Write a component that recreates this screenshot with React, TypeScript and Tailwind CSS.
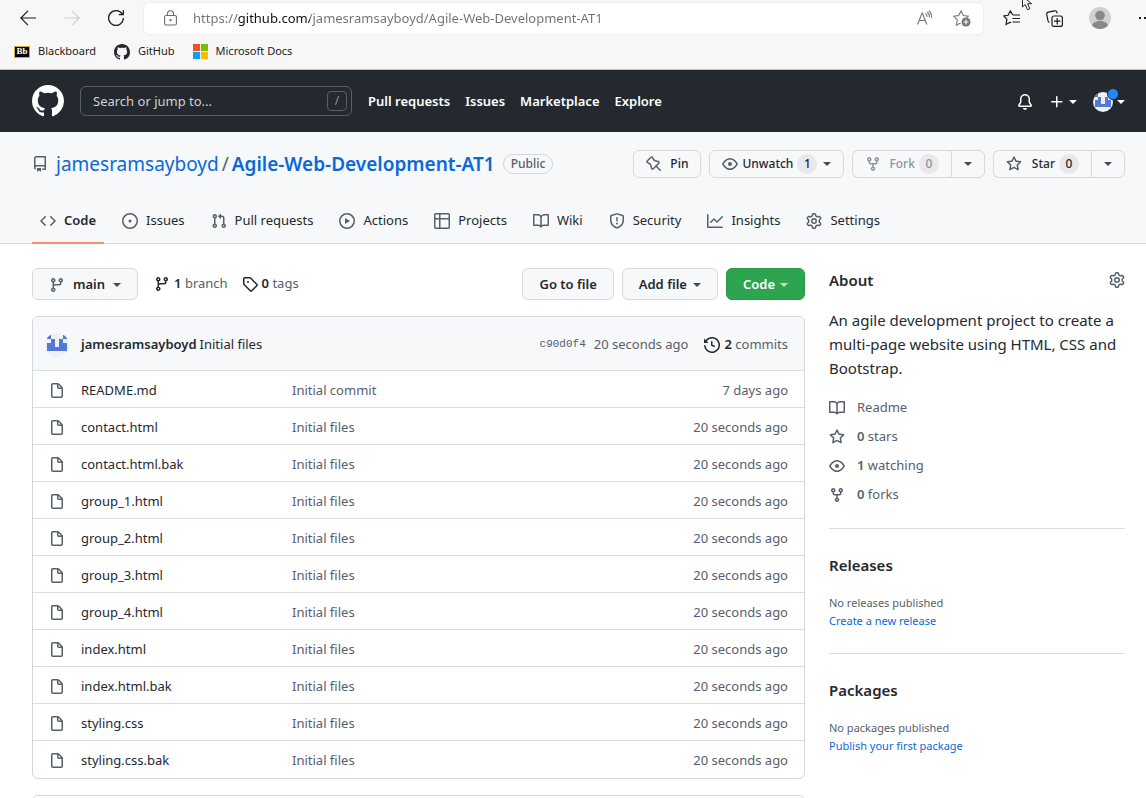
import React from "react";

const ICONS = {
  repo: "M2 2.5A2.5 2.5 0 014.5 0h8.75a.75.75 0 01.75.75v12.5a.75.75 0 01-.75.75h-2.5a.75.75 0 110-1.5h1.75v-2h-8a1 1 0 00-.714 1.7.75.75 0 01-1.072 1.05A2.495 2.495 0 012 11.5v-9zm10.5-1V9h-8c-.356 0-.694.074-1 .208V2.5a1 1 0 011-1h8zM5 12.25v3.25a.25.25 0 00.4.2l1.45-1.087a.25.25 0 01.3 0L8.6 15.7a.25.25 0 00.4-.2v-3.25a.25.25 0 00-.25-.25h-3.5a.25.25 0 00-.25.25z",
  code: "M4.72 3.22a.75.75 0 011.06 1.06L2.06 8l3.72 3.72a.75.75 0 11-1.06 1.06L.47 8.53a.75.75 0 010-1.06l4.25-4.25zm6.56 0a.75.75 0 10-1.06 1.06L13.94 8l-3.72 3.72a.75.75 0 101.06 1.06l4.25-4.25a.75.75 0 000-1.06l-4.25-4.25z",
  issue: "M8 9.5a1.5 1.5 0 100-3 1.5 1.5 0 000 3zM8 0a8 8 0 100 16A8 8 0 008 0zM1.5 8a6.5 6.5 0 1113 0 6.5 6.5 0 01-13 0z",
  pull: "M7.177 3.073L9.573.677A.25.25 0 0110 .854v4.792a.25.25 0 01-.427.177L7.177 3.427a.25.25 0 010-.354zM3.75 2.5a.75.75 0 100 1.5.75.75 0 000-1.5zm-2.25.75a2.25 2.25 0 113 2.122v5.256a2.251 2.251 0 11-1.5 0V5.372A2.25 2.25 0 011.5 3.25zM11 2.5h-1V4h1a1 1 0 011 1v5.628a2.251 2.251 0 101.5 0V5A2.5 2.5 0 0011 2.5zm1 10.25a.75.75 0 111.5 0 .75.75 0 01-1.5 0zM3.75 12a.75.75 0 100 1.5.75.75 0 000-1.5z",
  play: "M1.5 8a6.5 6.5 0 1113 0 6.5 6.5 0 01-13 0zM8 0a8 8 0 100 16A8 8 0 008 0zM6.379 5.227A.25.25 0 006 5.442v5.117a.25.25 0 00.379.214l4.264-2.559a.25.25 0 000-.428L6.379 5.227z",
  table: "M0 1.75C0 .784.784 0 1.75 0h12.5C15.216 0 16 .784 16 1.75v3.585a.746.746 0 010 .83v8.085A1.75 1.75 0 0114.25 16H6.309a.748.748 0 01-1.118 0H1.75A1.75 1.75 0 010 14.25V6.165a.746.746 0 010-.83V1.75zM1.5 6.5v7.75c0 .138.112.25.25.25H5v-8H1.5zM5 5H1.5V1.75a.25.25 0 01.25-.25H5V5zm1.5 1.5v8h7.75a.25.25 0 00.25-.25V6.5h-8zm8-1.5h-8V1.5h7.75a.25.25 0 01.25.25V5z",
  book: "M0 1.75A.75.75 0 01.75 1h4.253c1.227 0 2.317.59 3 1.501A3.744 3.744 0 0111.006 1h4.245a.75.75 0 01.75.75v10.5a.75.75 0 01-.75.75h-4.507a2.25 2.25 0 00-1.591.659l-.622.621a.75.75 0 01-1.06 0l-.622-.621A2.25 2.25 0 005.258 13H.75a.75.75 0 01-.75-.75V1.75zm8.755 3a2.25 2.25 0 012.25-2.25H14.5v9h-3.757c-.71 0-1.4.201-1.992.572l.004-7.322zm-1.504 7.324l.004-5.073-.002-2.253A2.25 2.25 0 005.003 2.5H1.5v9h3.757a3.75 3.75 0 011.994.574z",
  shield: "M7.467.133a1.75 1.75 0 011.066 0l5.25 1.68A1.75 1.75 0 0115 3.48V7c0 1.566-.32 3.182-1.303 4.682-.983 1.498-2.585 2.813-5.032 3.855a1.7 1.7 0 01-1.33 0c-2.447-1.042-4.049-2.357-5.032-3.855C1.32 10.182 1 8.566 1 7V3.48a1.75 1.75 0 011.217-1.667l5.25-1.68zm.61 1.429a.25.25 0 00-.153 0l-5.25 1.68a.25.25 0 00-.174.238V7c0 1.358.275 2.666 1.057 3.86.784 1.194 2.121 2.34 4.366 3.297a.2.2 0 00.154 0c2.245-.956 3.582-2.104 4.366-3.298C13.225 9.666 13.5 8.36 13.5 7V3.48a.25.25 0 00-.174-.237l-5.25-1.68zM9 10.5a1 1 0 11-2 0 1 1 0 012 0zm-.25-5.75a.75.75 0 10-1.5 0v3a.75.75 0 001.5 0v-3z",
  graph: "M1.5 1.75a.75.75 0 00-1.5 0v12.5c0 .414.336.75.75.75h14.5a.75.75 0 000-1.5H1.5V1.75zm14.28 2.53a.75.75 0 00-1.06-1.06L10 7.94 7.53 5.47a.75.75 0 00-1.06 0L3.22 8.72a.75.75 0 001.06 1.06L7 7.06l2.47 2.47a.75.75 0 001.06 0l5.25-5.25z",
  gear: "M7.429 1.525a6.593 6.593 0 011.142 0c.036.003.108.036.137.146l.289 1.105c.147.56.55.967.997 1.189.174.086.341.183.501.29.417.278.97.423 1.53.27l1.102-.303c.11-.03.175.016.195.046.219.31.41.641.573.989.014.031.022.11-.059.19l-.815.806c-.411.406-.562.957-.53 1.456a4.588 4.588 0 010 .582c-.032.499.119 1.05.53 1.456l.815.806c.08.08.073.159.059.19a6.494 6.494 0 01-.573.99c-.02.029-.086.074-.195.045l-1.103-.303c-.559-.153-1.112-.008-1.529.27-.16.107-.327.204-.5.29-.449.222-.851.628-.998 1.189l-.289 1.105c-.029.11-.101.143-.137.146a6.613 6.613 0 01-1.142 0c-.036-.003-.108-.037-.137-.146l-.289-1.105c-.147-.56-.55-.967-.997-1.189a4.502 4.502 0 01-.501-.29c-.417-.278-.97-.423-1.53-.27l-1.102.303c-.11.03-.175-.016-.195-.046a6.492 6.492 0 01-.573-.989c-.014-.031-.022-.11.059-.19l.815-.806c.411-.406.562-.957.53-1.456a4.587 4.587 0 010-.582c.032-.499-.119-1.05-.53-1.456l-.815-.806c-.08-.08-.073-.159-.059-.19a6.44 6.44 0 01.573-.99c.02-.029.086-.075.195-.045l1.103.303c.559.153 1.112.008 1.529-.27.16-.107.327-.204.5-.29.449-.222.851-.628.998-1.189l.289-1.105c.029-.11.101-.143.137-.146zM8 0c-.236 0-.47.01-.701.03-.743.065-1.29.615-1.458 1.261l-.29 1.106c-.017.066-.078.158-.211.224a5.994 5.994 0 00-.668.386c-.123.082-.233.09-.3.071L3.27 2.776c-.644-.177-1.392.02-1.82.63a7.977 7.977 0 00-.704 1.217c-.315.675-.111 1.422.363 1.891l.815.806c.05.048.098.147.088.294a6.084 6.084 0 000 .772c.01.147-.038.246-.088.294l-.815.806c-.474.469-.678 1.216-.363 1.891.2.428.436.835.704 1.218.428.609 1.176.806 1.82.63l1.103-.303c.066-.019.176-.011.299.071.213.143.436.272.668.386.133.066.194.158.212.224l.289 1.106c.169.646.715 1.196 1.458 1.26a8.094 8.094 0 001.402 0c.743-.064 1.29-.614 1.458-1.26l.29-1.106c.017-.066.078-.158.211-.224a5.98 5.98 0 00.668-.386c.123-.082.233-.09.3-.071l1.102.302c.644.177 1.392-.02 1.82-.63.268-.382.505-.789.704-1.217.315-.675.111-1.422-.364-1.891l-.814-.806c-.05-.048-.098-.147-.088-.294a6.1 6.1 0 000-.772c-.01-.147.039-.246.088-.294l.814-.806c.475-.469.679-1.216.364-1.891a7.992 7.992 0 00-.704-1.218c-.428-.609-1.176-.806-1.82-.63l-1.103.303c-.066.019-.176.011-.299-.071a5.991 5.991 0 00-.668-.386c-.133-.066-.194-.158-.212-.224L10.16 1.29C9.99.645 9.444.095 8.701.031A8.094 8.094 0 008 0zm1.5 8a1.5 1.5 0 11-3 0 1.5 1.5 0 013 0zM11 8a3 3 0 11-6 0 3 3 0 016 0z",
  branch: "M11.75 2.5a.75.75 0 100 1.5.75.75 0 000-1.5zm-2.25.75a2.25 2.25 0 113 2.122V6A2.5 2.5 0 0110 8.5H6a1 1 0 00-1 1v1.128a2.251 2.251 0 11-1.5 0V5.372a2.25 2.25 0 111.5 0v1.836A2.492 2.492 0 016 7h4a1 1 0 001-1v-.628A2.25 2.25 0 019.5 3.25zM4.25 12a.75.75 0 100 1.5.75.75 0 000-1.5zM3.5 3.25a.75.75 0 111.5 0 .75.75 0 01-1.5 0z",
  tag: "M2.5 7.775V2.75a.25.25 0 01.25-.25h5.025a.25.25 0 01.177.073l6.25 6.25a.25.25 0 010 .354l-5.025 5.025a.25.25 0 01-.354 0l-6.25-6.25a.25.25 0 01-.073-.177zm-1.5 0V2.75C1 1.784 1.784 1 2.75 1h5.025c.464 0 .91.184 1.238.513l6.25 6.25a1.75 1.75 0 010 2.474l-5.026 5.026a1.75 1.75 0 01-2.474 0l-6.25-6.25A1.75 1.75 0 011 7.775zM6 5a1 1 0 100 2 1 1 0 000-2z",
  history: "M1.643 3.143L.427 1.927A.25.25 0 000 2.104V5.75c0 .138.112.25.25.25h3.646a.25.25 0 00.177-.427L2.715 4.215a6.5 6.5 0 11-1.18 4.458.75.75 0 10-1.493.154 8.001 8.001 0 101.6-5.684zM7.75 4a.75.75 0 01.75.75v2.992l2.028.812a.75.75 0 01-.557 1.392l-2.5-1A.75.75 0 017 8.25v-3.5A.75.75 0 017.75 4z",
  file: "M3.75 1.5a.25.25 0 00-.25.25v11.5c0 .138.112.25.25.25h8.5a.25.25 0 00.25-.25V6H9.75A1.75 1.75 0 018 4.25V1.5H3.75zm5.75.56v2.19c0 .138.112.25.25.25h2.19L9.5 2.06zM2 1.75C2 .784 2.784 0 3.75 0h5.086c.464 0 .909.184 1.237.513l3.414 3.414c.329.328.513.773.513 1.237v8.086A1.75 1.75 0 0112.25 15h-8.5A1.75 1.75 0 012 13.25V1.75z",
  star: "M8 .25a.75.75 0 01.673.418l1.882 3.815 4.21.612a.75.75 0 01.416 1.279l-3.046 2.97.719 4.192a.75.75 0 01-1.088.791L8 12.347l-3.766 1.98a.75.75 0 01-1.088-.79l.72-4.194L.818 6.374a.75.75 0 01.416-1.28l4.21-.611L7.327.668A.75.75 0 018 .25zm0 2.445L6.615 5.5a.75.75 0 01-.564.41l-3.097.45 2.24 2.184a.75.75 0 01.216.664l-.528 3.084 2.769-1.456a.75.75 0 01.698 0l2.77 1.456-.53-3.084a.75.75 0 01.216-.664l2.24-2.183-3.096-.45a.75.75 0 01-.564-.41L8 2.694v.001z",
  eye: "M1.679 7.932c.412-.621 1.242-1.75 2.366-2.717C5.175 4.242 6.527 3.5 8 3.5c1.473 0 2.824.742 3.955 1.715 1.124.967 1.954 2.096 2.366 2.717a.119.119 0 010 .136c-.412.621-1.242 1.75-2.366 2.717C10.825 11.758 9.473 12.5 8 12.5c-1.473 0-2.824-.742-3.955-1.715C2.92 9.818 2.09 8.69 1.679 8.068a.119.119 0 010-.136zM8 2c-1.981 0-3.67.992-4.933 2.078C1.797 5.169.88 6.423.43 7.1a1.619 1.619 0 000 1.798c.45.678 1.367 1.932 2.637 3.024C4.329 13.008 6.019 14 8 14c1.981 0 3.67-.992 4.933-2.078 1.27-1.091 2.187-2.345 2.637-3.023a1.619 1.619 0 000-1.798c-.45-.678-1.367-1.932-2.637-3.023C11.671 2.992 9.981 2 8 2zm0 8a2 2 0 100-4 2 2 0 000 4z",
  fork: "M5 3.25a.75.75 0 11-1.5 0 .75.75 0 011.5 0zm0 2.122a2.25 2.25 0 10-1.5 0v.878A2.25 2.25 0 005.75 8.5h1.5v2.128a2.251 2.251 0 101.5 0V8.5h1.5a2.25 2.25 0 002.25-2.25v-.878a2.25 2.25 0 10-1.5 0v.878a.75.75 0 01-.75.75h-4.5A.75.75 0 015 6.25v-.878zm3.75 7.378a.75.75 0 11-1.5 0 .75.75 0 011.5 0zm3-8.75a.75.75 0 100-1.5.75.75 0 000 1.5z",
  pin: "M4.456.734a1.75 1.75 0 012.826.504l.613 1.327a3.081 3.081 0 002.084 1.707l2.454.584c1.332.317 1.8 1.972.832 2.94L11.06 10l3.72 3.72a.75.75 0 11-1.061 1.06L10 11.06l-2.204 2.205c-.968.968-2.623.5-2.94-.832l-.584-2.454a3.081 3.081 0 00-1.707-2.084l-1.327-.613a1.75 1.75 0 01-.504-2.826L4.456.734zM5.92 1.866a.25.25 0 00-.404-.072L1.794 5.516a.25.25 0 00.072.404l1.328.613A4.582 4.582 0 015.73 9.63l.584 2.454a.25.25 0 00.42.12l5.47-5.47a.25.25 0 00-.12-.42L9.63 5.73a4.581 4.581 0 01-3.098-2.537L5.92 1.866z",
  bell: "M8 16a2 2 0 001.985-1.75c.017-.137-.097-.25-.235-.25h-3.5c-.138 0-.252.113-.235.25A2 2 0 008 16zM8 1.5A3.5 3.5 0 004.5 5v2.947c0 .346-.102.683-.294.97l-1.703 2.556a.018.018 0 00-.003.01l.001.006c0 .002.002.004.004.006a.017.017 0 00.006.004l.007.001h10.964l.007-.001a.016.016 0 00.006-.004.016.016 0 00.004-.006l.001-.007a.017.017 0 00-.003-.01l-1.703-2.554a1.75 1.75 0 01-.294-.97V5A3.5 3.5 0 008 1.5zM3 5a5 5 0 0110 0v2.947c0 .05.015.098.042.139l1.703 2.555A1.518 1.518 0 0113.482 13H2.518a1.518 1.518 0 01-1.263-2.36l1.703-2.554A.25.25 0 003 7.947V5z",
  plus: "M7.75 2a.75.75 0 01.75.75V7h4.25a.75.75 0 110 1.5H8.5v4.25a.75.75 0 11-1.5 0V8.5H2.75a.75.75 0 010-1.5H7V2.75A.75.75 0 017.75 2z",
  mark: "M8 0C3.58 0 0 3.58 0 8c0 3.54 2.29 6.53 5.47 7.59.4.07.55-.17.55-.38 0-.19-.01-.82-.01-1.49-2.01.37-2.53-.49-2.69-.94-.09-.23-.48-.94-.82-1.13-.28-.15-.68-.52-.01-.53.63-.01 1.08.58 1.23.82.72 1.21 1.87.87 2.33.66.07-.52.28-.87.51-1.07-1.78-.2-3.64-.89-3.64-3.95 0-.87.31-1.59.82-2.15-.08-.2-.36-1.02.08-2.12 0 0 .67-.21 2.2.82.64-.18 1.32-.27 2-.27.68 0 1.36.09 2 .27 1.53-1.04 2.2-.82 2.2-.82.44 1.1.16 1.92.08 2.12.51.56.82 1.27.82 2.15 0 3.07-1.87 3.75-3.65 3.95.29.25.54.73.54 1.48 0 1.07-.01 1.93-.01 2.2 0 .21.15.46.55.38A8.013 8.013 0 0016 8c0-4.42-3.58-8-8-8z",
};

type IconName = keyof typeof ICONS;

function Icon({ name, className = "size-4" }: { name: IconName; className?: string }) {
  return (
    <svg viewBox="0 0 16 16" fill="currentColor" fillRule="evenodd" aria-hidden="true" className={`shrink-0 ${className}`}>
      <path d={ICONS[name]} />
    </svg>
  );
}

function Caret({ className = "" }: { className?: string }) {
  return <span aria-hidden="true" className={`inline-block size-0 border-x-4 border-t-4 border-x-transparent ${className}`} />;
}

function Identicon({ className }: { className: string }) {
  return (
    <svg viewBox="0 0 24 24" className={`shrink-0 rounded-full ${className}`} aria-hidden="true" shapeRendering="crispEdges">
      <rect width="24" height="24" fill="#f0f0f0" />
      <path fill="#5279d6" d="M3 2h3v4H2V3zM18 2h3l1 1v3h-4zM6 6h4v8h4V6h4v4h4v8H2v-8h4z" />
    </svg>
  );
}

function BrowserChrome() {
  const line = "shrink-0 fill-none stroke-[#1b1b1b]";
  return (
    <div className="border-b border-[#bfbfbf] bg-[#f7f7f7]">
      <div className="flex h-9 items-center overflow-hidden">
        <button aria-label="Back" className="ml-5">
          <svg viewBox="0 0 16 16" className={`size-4 ${line}`} strokeWidth="1.2"><path d="M16 8H.8M8 .8L.8 8 8 15.200" /></svg>
        </button>
        <button aria-label="Forward" disabled className="ml-7">
          <svg viewBox="0 0 16 16" className="size-4 fill-none stroke-[#cfcfcf]" strokeWidth="1.200"><path d="M0 8h15.200M8 .8L15.200 8 8 15.200" /></svg>
        </button>
        <button aria-label="Refresh" className="ml-7">
          <svg viewBox="0 0 16 16" className={`size-4 ${line}`} strokeWidth="1.300"><path d="M14.200 4A7.400 7.400 0 1 0 15.400 8M15.300.3v4.400h-4.400" /></svg>
        </button>
        <form className="ml-5 flex h-[31px] max-w-[839px] flex-1 items-center rounded-[5px] bg-white pr-3 pl-5 shadow-[0_0_2px_rgba(0,0,0,0.12)]">
          <svg viewBox="0 0 13 16" className="h-4 w-[13px] shrink-0 fill-none stroke-[#6b6b6b]" strokeWidth="1.1">
            <rect x=".6" y="5.500" width="11.800" height="9.500" rx="1.500" />
            <path d="M3.500 5.500V3.800a3 3 0 0 1 6 0v1.700" />
            <circle cx="6.500" cy="10.200" r=".6" fill="#6b6b6b" />
          </svg>
          <input
            aria-label="Address"
            readOnly
            value="https://github.com/jamesramsayboyd/Agile-Web-Development-AT1"
            className="ml-4 min-w-0 flex-1 bg-linear-[to_right,#717171_45px,#111_45px,#111_117px,#717171_117px] bg-clip-text pt-0.5 text-[13px] text-transparent outline-none"
          />
          <button type="button" aria-label="Read aloud">
            <svg viewBox="0 0 16 16" className="size-4 fill-none stroke-[#767676]" strokeWidth="1.100">
              <path d="M.6 14.500L5 3h.4l4.400 11.500M2.200 10.500h6M8.500 3.500a3.500 3.500 0 0 1 1.500 3.500M10 2a5.500 5.500 0 0 1 2.300 5.500M11.700.8a7.500 7.500 0 0 1 2.800 7" />
            </svg>
          </button>
          <button type="button" aria-label="Add to favourites" className="ml-5">
            <svg viewBox="0 0 18 18" className="size-[18px] fill-none stroke-[#767676]" strokeWidth="1.1">
              <path d="M7.500 14L3.400 16.200l.9-5.300L.7 7.200l5-.7L8 2l2.300 4.500 5 .7-1.500 1.500" />
              <circle cx="13" cy="13" r="4.500" fill="#767676" stroke="none" />
              <path d="M13 10.500v5M10.500 13h5" stroke="#fff" />
            </svg>
          </button>
        </form>
        <button aria-label="Favourites" className="ml-5">
          <svg viewBox="0 0 17 16" className={`h-4 w-[17px] ${line}`} strokeWidth="1.200">
            <path d="M10 4.800L9.600 4.600 7.300 1 5.100 5.300.8 6l3.100 3.200-.8 5.300 4.100-2.200.8.400M10 5h7M9.500 8.500h7.500M9.500 12h7.500" />
          </svg>
        </button>
        <button aria-label="Collections" className="ml-[26px]">
          <svg viewBox="0 0 17 17" className={`size-[17px] ${line}`} strokeWidth="1.200">
            <path d="M3.500 12.500A2 2 0 0 1 2 10.800L.7 4.500A2 2 0 0 1 2.200 2.200L8.500.8a2 2 0 0 1 2.400 1.500l.3 1" />
            <rect x="6" y="6" width="10.400" height="10.400" rx="2" />
            <path d="M11.200 8v6.400M8 11.200h6.400" />
          </svg>
        </button>
        <button aria-label="Profile" className="ml-[26px]">
          <svg viewBox="0 0 22 22" className="size-[22px] shrink-0">
            <circle cx="11" cy="11" r="11" fill="#d2d0ce" />
            <circle cx="11" cy="8.500" r="4.800" fill="#8a8886" />
            <path d="M3 18.500c1.500-3.500 5-4.500 8-4.500s6.500 1 8 4.500a11 11 0 0 1-16 0z" fill="#8a8886" />
          </svg>
        </button>
        <button aria-label="Settings and more" className="-mr-2.5 ml-7">
          <svg viewBox="0 0 16 4" className="h-1 w-4 shrink-0"><path d="M0 1h2v2H0zM5 1h2v2H5zM10 1h2v2h-2z" fill="#1b1b1b" /></svg>
        </button>
      </div>
      <nav aria-label="Bookmarks" className="flex h-[33px] items-center gap-[18px] pb-0.5 pl-[14px] text-[11px] text-[#1b1b1b]">
        <a href="#" className="flex items-center gap-2">
          <span aria-hidden="true" className="flex h-3 w-4 items-center justify-center border border-[#d9a62e] bg-black font-['Liberation_Serif',serif] text-[9px] font-bold text-white">Bb</span>
          Blackboard
        </a>
        <a href="#" className="flex items-center gap-2">
          <Icon name="mark" className="size-4 text-[#24292f]" />
          GitHub
        </a>
        <a href="#" className="flex items-center gap-2">
          <span aria-hidden="true" className="grid size-[15px] grid-cols-2 gap-px">
            <span className="bg-[#f25022]" /><span className="bg-[#7fba00]" /><span className="bg-[#00a4ef]" /><span className="bg-[#ffb900]" />
          </span>
          Microsoft Docs
        </a>
      </nav>
      <svg viewBox="0 0 12 15" aria-hidden="true" className="absolute -top-1 left-[1022px] h-[15px] w-3 fill-white stroke-[#222]">
        <path d="M.5.5v10.500l2.700-2.500 2.300 5.200 2.300-1L5.600 7.700H9.600z" />
      </svg>
    </div>
  );
}

function SiteHeader() {
  return (
    <header className="flex h-[62px] items-center bg-[#24292f] pr-[21px] pl-8 text-white">
      <a href="#" aria-label="Homepage"><Icon name="mark" className="size-8" /></a>
      <form className="ml-4 flex h-[30px] w-[272px] items-center rounded-md border border-[#57606a] pr-1 pl-3">
        <input aria-label="Search or jump to" placeholder="Search or jump to..." className="min-w-0 flex-1 pt-0.5 text-[13px] outline-none placeholder:text-[#d0d1d2]" />
        <kbd className="flex h-5 w-5 items-center justify-center rounded border border-[#57606a] font-['Noto_Sans',sans-serif] text-xs text-[#8c959f]">/</kbd>
      </form>
      <nav aria-label="Global" className="ml-4 flex gap-[15px] pt-0.5 text-[13px] font-semibold">
        <a href="#">Pull requests</a>
        <a href="#">Issues</a>
        <a href="#">Marketplace</a>
        <a href="#">Explore</a>
      </nav>
      <div className="ml-auto flex items-center pt-0.5">
        <button aria-label="Notifications"><Icon name="bell" /></button>
        <button aria-label="Create new" className="ml-4 flex items-center gap-1"><Icon name="plus" /><Caret /></button>
        <button aria-label="Account" className="relative ml-4 flex items-center gap-1">
          <Identicon className="size-5" />
          <span className="absolute -top-1 left-3.5 size-3 rounded-full border border-[#24292f] bg-[#2188ff]" />
          <Caret />
        </button>
      </div>
    </header>
  );
}

function Counter({ children }: { children: React.ReactNode }) {
  return <span className="flex h-5 min-w-5 items-center justify-center rounded-full bg-[#e7e9eb] px-1.5">{children}</span>;
}

const smallButton = "flex h-7 items-center rounded-md border border-[#d5d8dc] bg-[#f6f8fa] text-xs font-medium";

const TABS: { icon: IconName; label: string }[] = [
  { icon: "code", label: "Code" },
  { icon: "issue", label: "Issues" },
  { icon: "pull", label: "Pull requests" },
  { icon: "play", label: "Actions" },
  { icon: "table", label: "Projects" },
  { icon: "book", label: "Wiki" },
  { icon: "shield", label: "Security" },
  { icon: "graph", label: "Insights" },
  { icon: "gear", label: "Settings" },
];

function RepoHead() {
  return (
    <div className="border-b border-[#d8dee4] bg-[#f6f8fa] pr-[21px] pl-8">
      <div className="flex h-16 items-center">
        <Icon name="repo" className="size-4 text-[#57606a]" />
        <h1 className="ml-2 flex items-center gap-[3px] text-[19px] whitespace-nowrap">
          <a href="#" className="text-[#0969da]">jamesramsayboyd</a>
          <span className="text-[#57606a]">/</span>
          <a href="#" className="font-semibold text-[#0969da]">Agile-Web-Development-AT1</a>
        </h1>
        <span className="ml-2 rounded-full border border-[#d0d7de] px-[7px] text-xs leading-[18px] font-medium text-[#57606a]">Public</span>
        <div className="ml-auto flex gap-2">
          <button className={`${smallButton} gap-2 px-3`}><Icon name="pin" className="size-4 text-[#57606a]" />Pin</button>
          <button className={`${smallButton} px-3`}>
            <Icon name="eye" className="mr-1 size-4 text-[#57606a]" />Unwatch
            <span className="mr-1.5 ml-1"><Counter>1</Counter></span>
            <Caret className="text-[#424a53]" />
          </button>
          <div className="flex">
            <button disabled className={`${smallButton} rounded-r-none border-r-0 px-3 text-[#8c959f]`}>
              <Icon name="fork" className="mr-2 size-4" />Fork<span className="ml-1"><Counter>0</Counter></span>
            </button>
            <button aria-label="Fork options" className={`${smallButton} rounded-l-none px-3`}><Caret className="text-[#424a53]" /></button>
          </div>
          <div className="flex">
            <button className={`${smallButton} rounded-r-none border-r-0 px-3`}>
              <Icon name="star" className="mr-2.5 size-4 text-[#57606a]" />Star<span className="ml-1"><Counter>0</Counter></span>
            </button>
            <button aria-label="Star options" className={`${smallButton} rounded-l-none px-3`}><Caret className="text-[#424a53]" /></button>
          </div>
        </div>
      </div>
      <nav aria-label="Repository" className="flex h-[47px] gap-2.5 text-[13px]">
        {TABS.map((tab, i) => (
          <a key={tab.label} href="#" aria-current={i === 0 ? "page" : undefined}
            className={`-mb-px flex items-center gap-2 border-b-2 px-2 pt-[3px] ${i === 0 ? "border-[#fd8c73] font-semibold" : "border-transparent"}`}>
            <Icon name={tab.icon} className="size-4 text-[#57606a]" />
            {tab.label}
          </a>
        ))}
      </nav>
    </div>
  );
}

const FILES = [
  { name: "README.md", message: "Initial commit", age: "7 days ago" },
  ...["contact.html", "contact.html.bak", "group_1.html", "group_2.html", "group_3.html", "group_4.html", "index.html", "index.html.bak", "styling.css", "styling.css.bak"].map(
    (name) => ({ name, message: "Initial files", age: "20 seconds ago" }),
  ),
];

const button = "flex h-8 items-center rounded-md border border-[#d5d8dc] bg-[#f6f8fa] px-4 pt-0.5 font-semibold";

function Files() {
  return (
    <main className="min-w-0 flex-1 text-[13px]">
      <div className="flex items-center">
        <button className={button}><Icon name="branch" className="mr-2 size-4 text-[#57606a]" />main<Caret className="ml-2 text-[#424a53]" /></button>
        <a href="#" className="ml-4 flex items-center gap-1 text-[#57606a]"><Icon name="branch" className="size-4 text-[#24292f]" /><span><b className="font-semibold text-[#24292f]">1</b> branch</span></a>
        <a href="#" className="ml-[14px] flex items-center gap-1 text-[#57606a]"><Icon name="tag" className="size-4 text-[#24292f]" /><span><b className="font-semibold text-[#24292f]">0</b> tags</span></a>
        <div className="ml-auto flex gap-2">
          <button className={button}>Go to file</button>
          <button className={button}>Add file<Caret className="ml-1.5 text-[#424a53]" /></button>
          <button className="flex h-8 items-center rounded-md border border-[#2a964a] bg-[#2da44e] px-4 pt-0.5 font-semibold text-white">Code<Caret className="ml-[5px] text-[#c0e4ca]" /></button>
        </div>
      </div>
      <div className="mt-4 overflow-hidden rounded-md border border-[#d0d7de]">
        <div className="flex h-[53px] items-center bg-[#f6f8fa] px-4 pt-0.5 text-[#57606a]">
          <span className="-ml-1"><Identicon className="size-6" /></span>
          <a href="#" className="ml-3 font-semibold text-[#24292f]">jamesramsayboyd</a>
          <a href="#" className="ml-[3px] text-[#24292f]">Initial files</a>
          <a href="#" className="ml-auto font-['Liberation_Mono',monospace] text-[11px]">c90d0f4</a>
          <span className="ml-2">20 seconds ago</span>
          <a href="#" className="ml-4 flex items-center gap-1"><Icon name="history" className="size-4 text-[#24292f]" /><span><b className="font-semibold text-[#24292f]">2</b> commits</span></a>
        </div>
        <table className="w-full table-fixed">
          <tbody>
            {FILES.map((f) => (
              <tr key={f.name} className="h-[37px] border-t border-[#d8dee4]">
                <td className="w-12 pt-[3px] pl-4"><Icon name="file" className="size-4 text-[#57606a]" /></td>
                <td className="w-[211px] pt-[3px]"><a href="#">{f.name}</a></td>
                <td className="pt-[3px] text-[#57606a]"><a href="#">{f.message}</a></td>
                <td className="w-40 pt-[3px] pr-4 text-right text-[#57606a]">{f.age}</td>
              </tr>
            ))}
          </tbody>
        </table>
      </div>
      <section aria-label="Readme" className="mt-4 h-14 rounded-md border border-[#d0d7de]" />
    </main>
  );
}

const STATS: { icon: IconName; count?: string; label: string }[] = [
  { icon: "book", label: "Readme" },
  { icon: "star", count: "0", label: "stars" },
  { icon: "eye", count: "1", label: "watching" },
  { icon: "fork", count: "0", label: "forks" },
];

function EmptySection({ title, note, action }: { title: string; note: string; action: string }) {
  return (
    <section className="border-t border-[#d8dee4] pt-6 pb-[23px]">
      <h2 className="text-[15px] leading-6 font-semibold">{title}</h2>
      <p className="mt-[17px] text-[11px] leading-[18px] text-[#57606a]">{note}</p>
      <a href="#" className="block text-[11px] leading-[18px] text-[#0969da]">{action}</a>
    </section>
  );
}

function Sidebar() {
  return (
    <aside className="w-[296px] shrink-0">
      <div className="flex items-center justify-between">
        <h2 className="text-[15px] leading-6 font-semibold">About</h2>
        <button aria-label="Edit repository details"><Icon name="gear" className="size-4 text-[#57606a]" /></button>
      </div>
      <p className="mt-4 text-[15px] leading-6">An agile development project to create a multi-page website using HTML, CSS and Bootstrap.</p>
      <ul className="mt-[13px] mb-[19px] text-[13px] text-[#57606a]">
        {STATS.map((s) => (
          <li key={s.label} className="flex h-[29px] items-center gap-3">
            <Icon name={s.icon} />
            <a href="#">{s.count && <b className="font-semibold">{s.count} </b>}{s.label}</a>
          </li>
        ))}
      </ul>
      <EmptySection title="Releases" note="No releases published" action="Create a new release" />
      <EmptySection title="Packages" note="No packages published" action="Publish your first package" />
    </aside>
  );
}

export default function App() {
  return (
    <div className="relative h-screen overflow-hidden bg-white font-['Noto_Sans','Open_Sans',sans-serif] text-[#24292f]">
      <BrowserChrome />
      <SiteHeader />
      <RepoHead />
      <div className="flex gap-6 pt-6 pr-[21px] pl-8">
        <Files />
        <Sidebar />
      </div>
    </div>
  );
}
